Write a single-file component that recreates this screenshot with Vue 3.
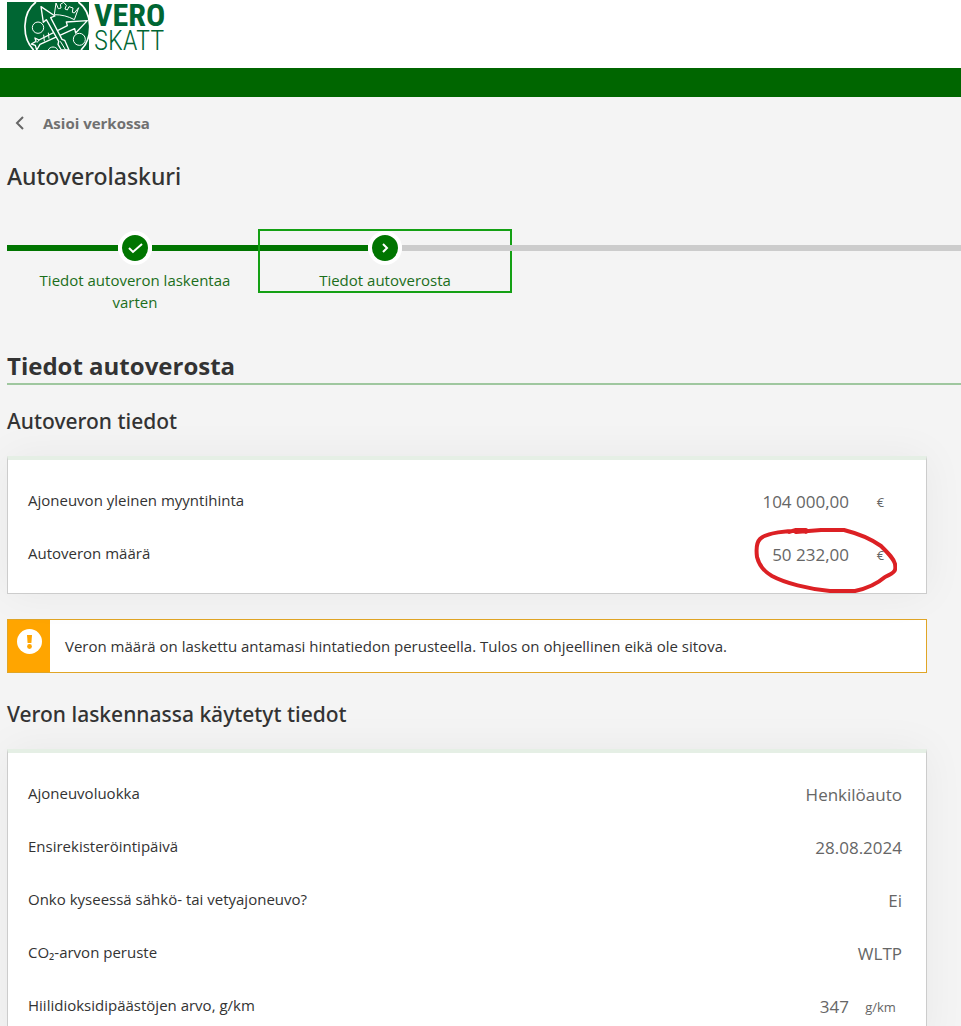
<template>
  <div class="page">
    <header class="header">
      <a class="logo" href="#" aria-label="Vero Skatt">
        <svg class="emblem" viewBox="0 0 246 144" aria-hidden="true">
          <rect width="246" height="144" fill="#006633" />
          <g fill="none" stroke="#fff" stroke-linejoin="round">
            <path d="M87 0C44 32 44 108 80 144M214 0C258 32 258 108 222 144" stroke-width="5" />
            <g stroke-width="3">
              <circle cx="93" cy="77" r="17" />
              <circle cx="217" cy="112" r="18" />
              <path d="M124 144c4-12 24-12 28 0" />
              <path d="M147 3l7 17 8-2-2-11 10-6 8 9-4 11 7 3 5-10 12 4-2 13 6 2 13-16-13 36c-18-10-38-15-60-15z" />
            </g>
            <g stroke-width="4" fill="#006633">
              <path d="M84 108l12 6 85-43-3-11 63-4-35 37-3-13-104 47-10 17-4-14-12-4 14-8z" />
              <path d="M96 114l-6 8M110 98l2 20M124 92l2 18" stroke-width="3" />
              <path d="M102 14l7 47 9-8 37 65-2 9 10 17h23l-13-29-8-3-34-65 13-5z" />
              <path d="M160 118l16 26" stroke-width="3" />
            </g>
          </g>
        </svg>
        <span class="wordmark">
          <strong>VERO</strong>
          <span>SKATT</span>
        </span>
      </a>
    </header>
    <div class="band"></div>

    <main class="content">
      <nav>
        <a class="back" href="#">
          <svg width="10" height="14" viewBox="0 0 10 14" aria-hidden="true">
            <path d="M8 1L2 7l6 6" fill="none" stroke="#666" stroke-width="2" />
          </svg>
          Asioi verkossa
        </a>
      </nav>

      <h1>Autoverolaskuri</h1>

      <ol class="stepper">
        <li v-for="step in steps" :key="step.label" class="step" :class="{ current: step.current }">
          <div class="track">
            <span class="line"></span>
            <span class="marker">
              <svg width="26" height="26" viewBox="0 0 26 26" aria-hidden="true">
                <path :d="step.icon" fill="none" stroke="#fff" stroke-width="2" />
              </svg>
            </span>
            <span class="line" :class="{ pending: step.current }"></span>
          </div>
          <span class="step-label">{{ step.label }}</span>
        </li>
      </ol>

      <h2>Tiedot autoverosta</h2>

      <h3>Autoveron tiedot</h3>
      <div class="card">
        <dl>
          <div v-for="row in taxRows" :key="row.label" class="row">
            <dt>{{ row.label }}</dt>
            <dd>{{ row.value }}<span v-if="row.unit" class="unit">{{ row.unit }}</span></dd>
          </div>
        </dl>
        <svg class="highlight" width="144" height="68" viewBox="0 0 144 68" aria-hidden="true">
          <path
            d="M36 6l7-2 10 0 0 2M53 5C34 4 13 7 7 13C3 17 3 23 4 31C6 39 12 46 19 50C32 57 55 63 77 65L102 65C116 62 125 57 132 51C143 46 143 44 142 38C141 33 136 28 128 20C121 15 107 8 91 4L68 4L43 6"
            fill="none" stroke="#dc2024" stroke-width="4" stroke-linecap="round" stroke-linejoin="round"
          />
        </svg>
      </div>

      <div class="alert" role="note">
        <div class="alert-icon">
          <svg width="25" height="25" viewBox="0 0 25 25" aria-hidden="true">
            <circle cx="12.5" cy="12.5" r="12.5" fill="#fff" />
            <path d="M10 6h5l-.6 8h-3.8z" fill="#ffa500" />
            <circle cx="12.5" cy="17.5" r="2.4" fill="#ffa500" />
          </svg>
        </div>
        <p>Veron määrä on laskettu antamasi hintatiedon perusteella. Tulos on ohjeellinen eikä ole sitova.</p>
      </div>

      <h3>Veron laskennassa käytetyt tiedot</h3>
      <div class="card">
        <dl>
          <div v-for="row in vehicleRows" :key="row.label" class="row">
            <dt>{{ row.label }}</dt>
            <dd>{{ row.value }}<span v-if="row.unit" class="unit">{{ row.unit }}</span></dd>
          </div>
        </dl>
      </div>
    </main>
  </div>
</template>

<script setup>
const steps = [
  { label: 'Tiedot autoveron laskentaa varten', icon: 'M7 13l4 4 9-8', current: false },
  { label: 'Tiedot autoverosta', icon: 'M11 9l4 4-4 4', current: true }
]

const taxRows = [
  { label: 'Ajoneuvon yleinen myyntihinta', value: '104 000,00', unit: '€' },
  { label: 'Autoveron määrä', value: '50 232,00', unit: '€' }
]

const vehicleRows = [
  { label: 'Ajoneuvoluokka', value: 'Henkilöauto' },
  { label: 'Ensirekisteröintipäivä', value: '28.08.2024' },
  { label: 'Onko kyseessä sähkö- tai vetyajoneuvo?', value: 'Ei' },
  { label: 'CO₂-arvon peruste', value: 'WLTP' },
  { label: 'Hiilidioksidipäästöjen arvo, g/km', value: '347', unit: 'g/km' }
]
</script>

<style>
html {
  background: #f4f4f4;
}
</style>

<style scoped>
.page {
  min-height: 100vh;
  background: #f4f4f4;
  color: #333;
  font-family: "Open Sans", "Noto Sans", sans-serif;
  font-size: 15px;
}

.header {
  height: 68px;
  box-sizing: border-box;
  padding: 2px 7px;
  background: #fff;
}

.logo {
  display: inline-flex;
  gap: 5px;
  color: #006633;
  text-decoration: none;
}

.emblem {
  width: 82px;
  height: 48px;
}

.wordmark {
  display: flex;
  flex-direction: column;
  font-family: "Roboto Condensed", "Liberation Sans Narrow", "Liberation Sans", sans-serif;
  font-size: 27px;
  font-weight: 300;
  line-height: 24px;
}

.wordmark strong {
  font-size: 32px;
  font-weight: 700;
  line-height: 27px;
}

.band {
  height: 29px;
  background: #006600;
}

.content {
  padding-left: 7px;
}

.back {
  display: inline-flex;
  align-items: center;
  gap: 18px;
  padding: 15px 8px 0;
  line-height: 22px;
  font-weight: 700;
  color: #707070;
  text-decoration: none;
}

h1,
h2,
h3 {
  margin: 0;
  color: #333;
}

h1,
h3 {
  font-family: "Noto Sans", "Open Sans", sans-serif;
  font-weight: 500;
}

h1 {
  margin-top: 26px;
  font-size: 23px;
  line-height: 32px;
}

h2 {
  margin-top: 36px;
  border-bottom: 2px solid #9fc79f;
  font-size: 24px;
  line-height: 34px;
  font-weight: 700;
}

h3 {
  margin-top: 21px;
  font-size: 21px;
  line-height: 30px;
}

.stepper {
  display: flex;
  align-items: flex-start;
  margin: 39px 0 0;
  padding: 0;
  list-style: none;
}

/* track ends before the first and after the last step */
.stepper::before,
.stepper::after {
  content: "";
  height: 6px;
  margin-top: 14px;
}

.stepper::before {
  width: 3px;
  background: #007500;
}

.stepper::after {
  flex: 1;
  background: #ccc;
}

.step {
  width: 250px;
  text-align: center;
}

.step.current {
  outline: 2px solid #14a014;
}

.track {
  display: flex;
  align-items: center;
  margin-bottom: 4px;
}

.line {
  flex: 1;
  height: 6px;
  background: #007500;
}

.line.pending {
  background: #ccc;
}

.marker {
  display: flex;
  border: 4px solid #fff;
  border-radius: 50%;
  background: #007500;
}

.step-label {
  display: block;
  padding: 0 20px;
  line-height: 22px;
  color: #1b6e1b;
}

.card {
  position: relative;
  margin: 20px 34px 0 0;
  padding: 13px 24px 14px 20px;
  border: 1px solid #ccc;
  border-top: 4px solid #e5efe5;
  background: #fff;
  box-shadow: 0 0 40px rgba(0, 0, 0, 0.05);
}

dl,
dd {
  margin: 0;
}

.row {
  display: flex;
  align-items: center;
  justify-content: space-between;
  height: 53px;
}

dd {
  display: flex;
  align-items: center;
  gap: 10px;
  padding-top: 4px;
  font-size: 17px;
  color: #666;
}

.unit {
  width: 43px;
  font-size: 13px;
  text-align: center;
}

.highlight {
  position: absolute;
  right: 29px;
  bottom: -1px;
}

.alert {
  display: flex;
  margin: 25px 34px 0 0;
  border: 1px solid #e0a526;
  background: #fff;
}

.alert-icon {
  width: 42px;
  padding-top: 9px;
  box-sizing: border-box;
  background: #ffa500;
  text-align: center;
}

.alert p {
  margin: 0;
  padding: 15px;
  line-height: 22px;
}

.alert + h3 {
  margin-top: 26px;
}
</style>
